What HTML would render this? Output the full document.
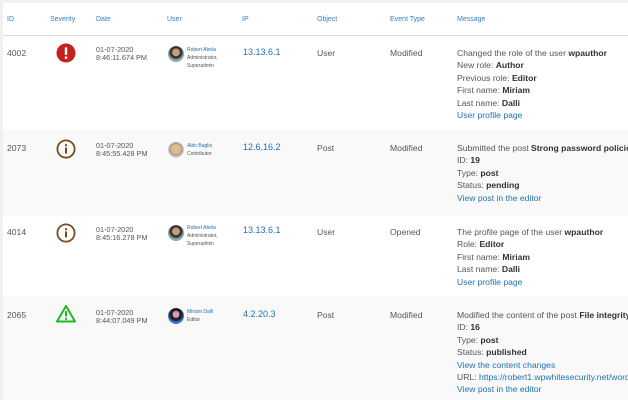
<!DOCTYPE html><html><head><style>
*{margin:0;padding:0;box-sizing:border-box}
body{width:628px;height:400px;overflow:hidden;background:#f0f0f1;font-family:"Liberation Sans",sans-serif;font-size:8.6px;color:#50575e;position:relative}
.p{position:absolute;left:3px;top:3px;right:0;bottom:0;background:#fff}
.a{position:absolute;white-space:nowrap}
.h{color:#3582c4;font-size:7px;top:16px}
.r{position:absolute;left:3px;right:0}
.g{background:#f9f9f9}
.blue{color:#2271b1}
.d{font-size:7.3px;line-height:7.5px;color:#555}
.u{font-size:5px;line-height:8px;color:#555}
.u b{color:#2271b1;font-weight:normal}
.m{line-height:12.4px}
.m b{color:#2c3338}
.av{position:absolute;width:16px;height:16px;border-radius:50%;background:radial-gradient(circle at 50% 40%,#c99a7a 0 30%,#333 32% 45%,#8aa 60%)}
</style></head><body>
<div class="p"></div>
<div class="r" style="top:35px;height:1px;background:#dcdcde"></div>
<div class="r g" style="top:130px;height:86px"></div>
<div class="r g" style="top:296px;height:104px"></div>
<div class="a h" style="left:7px">ID</div>
<div class="a h" style="left:50px">Severity</div>
<div class="a h" style="left:96px">Date</div>
<div class="a h" style="left:167px">User</div>
<div class="a h" style="left:242px">IP</div>
<div class="a h" style="left:317px">Object</div>
<div class="a h" style="left:390px">Event Type</div>
<div class="a h" style="left:457px">Message</div>

<!-- row1 -->
<div class="a" style="left:7px;top:48px">4002</div>
<svg class="a" style="left:56px;top:43px" width="20" height="20"><circle cx="10" cy="10" r="9.5" fill="#c5211f"/><rect x="8.8" y="4.5" width="2.4" height="7.5" fill="#fff"/><rect x="8.8" y="13.5" width="2.4" height="2.4" fill="#fff"/></svg>
<div class="a d" style="left:96px;top:46px">01-07-2020<br>8:46:11.674 PM</div>
<div class="av" style="left:168px;top:46px"></div>
<div class="a u" style="left:187px;top:46px"><b>Robert Abela</b><br>Administrator,<br>Superadmin</div>
<div class="a blue" style="left:243px;top:47px;font-size:9px">13.13.6.1</div>
<div class="a" style="left:317px;top:48px">User</div>
<div class="a" style="left:390px;top:48px">Modified</div>
<div class="a m" style="left:457px;top:47px">Changed the role of the user <b>wpauthor</b><br>New role: <b>Author</b><br>Previous role: <b>Editor</b><br>First name: <b>Miriam</b><br>Last name: <b>Dalli</b><br><span class="blue">User profile page</span></div>

<!-- row2 -->
<div class="a" style="left:7px;top:143px">2073</div>
<svg class="a" style="left:56px;top:139px" width="20" height="20"><circle cx="10" cy="10" r="8.6" fill="none" stroke="#7a4a1d" stroke-width="1.8"/><rect x="9" y="8.5" width="2" height="6" fill="#7a4a1d"/><rect x="9" y="5.2" width="2" height="2" fill="#7a4a1d"/></svg>
<div class="a d" style="left:96px;top:142px">01-07-2020<br>8:45:55.428 PM</div>
<div class="av" style="left:168px;top:142px;background:radial-gradient(circle at 50% 45%,#e0c090 0 35%,#a98 50%,#dde 70%)"></div>
<div class="a u" style="left:187px;top:142px"><b>Aldo Baglio</b><br>Contributor</div>
<div class="a blue" style="left:243px;top:142px;font-size:9px">12.6.16.2</div>
<div class="a" style="left:317px;top:143px">Post</div>
<div class="a" style="left:390px;top:143px">Modified</div>
<div class="a m" style="left:457px;top:142px">Submitted the post <b>Strong password policies for</b><br>ID: <b>19</b><br>Type: <b>post</b><br>Status: <b>pending</b><br><span class="blue">View post in the editor</span></div>

<!-- row3 -->
<div class="a" style="left:7px;top:227px">4014</div>
<svg class="a" style="left:56px;top:223px" width="20" height="20"><circle cx="10" cy="10" r="8.6" fill="none" stroke="#7a4a1d" stroke-width="1.8"/><rect x="9" y="8.5" width="2" height="6" fill="#7a4a1d"/><rect x="9" y="5.2" width="2" height="2" fill="#7a4a1d"/></svg>
<div class="a d" style="left:96px;top:226px">01-07-2020<br>8:45:16.278 PM</div>
<div class="av" style="left:168px;top:225px"></div>
<div class="a u" style="left:187px;top:224px"><b>Robert Abela</b><br>Administrator,<br>Superadmin</div>
<div class="a blue" style="left:243px;top:225px;font-size:9px">13.13.6.1</div>
<div class="a" style="left:317px;top:227px">User</div>
<div class="a" style="left:390px;top:227px">Opened</div>
<div class="a m" style="left:457px;top:226px">The profile page of the user <b>wpauthor</b><br>Role: <b>Editor</b><br>First name: <b>Miriam</b><br>Last name: <b>Dalli</b><br><span class="blue">User profile page</span></div>

<!-- row4 -->
<div class="a" style="left:7px;top:310px">2065</div>
<svg class="a" style="left:55px;top:304px" width="22" height="20"><path d="M11 2 L20 17.5 H2 Z" fill="none" stroke="#1fba1f" stroke-width="2" stroke-linejoin="round"/><rect x="10" y="7" width="2" height="5.5" fill="#1fba1f"/><rect x="10" y="13.8" width="2" height="2" fill="#1fba1f"/></svg>
<div class="a d" style="left:96px;top:309px">01-07-2020<br>8:44:07.049 PM</div>
<div class="av" style="left:168px;top:308px;background:radial-gradient(circle at 50% 40%,#d9b 0 25%,#222 30% 50%,#37c 60%)"></div>
<div class="a u" style="left:187px;top:308px"><b>Miriam Dalli</b><br>Editor</div>
<div class="a blue" style="left:243px;top:309px;font-size:9px">4.2.20.3</div>
<div class="a" style="left:317px;top:310px">Post</div>
<div class="a" style="left:390px;top:310px">Modified</div>
<div class="a m" style="left:457px;top:309px">Modified the content of the post <b>File integrity scans</b><br>ID: <b>16</b><br>Type: <b>post</b><br>Status: <b>published</b><br><span class="blue">View the content changes</span><br>URL: <span class="blue">https://robert1.wpwhitesecurity.net/wordpress</span><br><span class="blue">View post in the editor</span></div>
</body></html>
